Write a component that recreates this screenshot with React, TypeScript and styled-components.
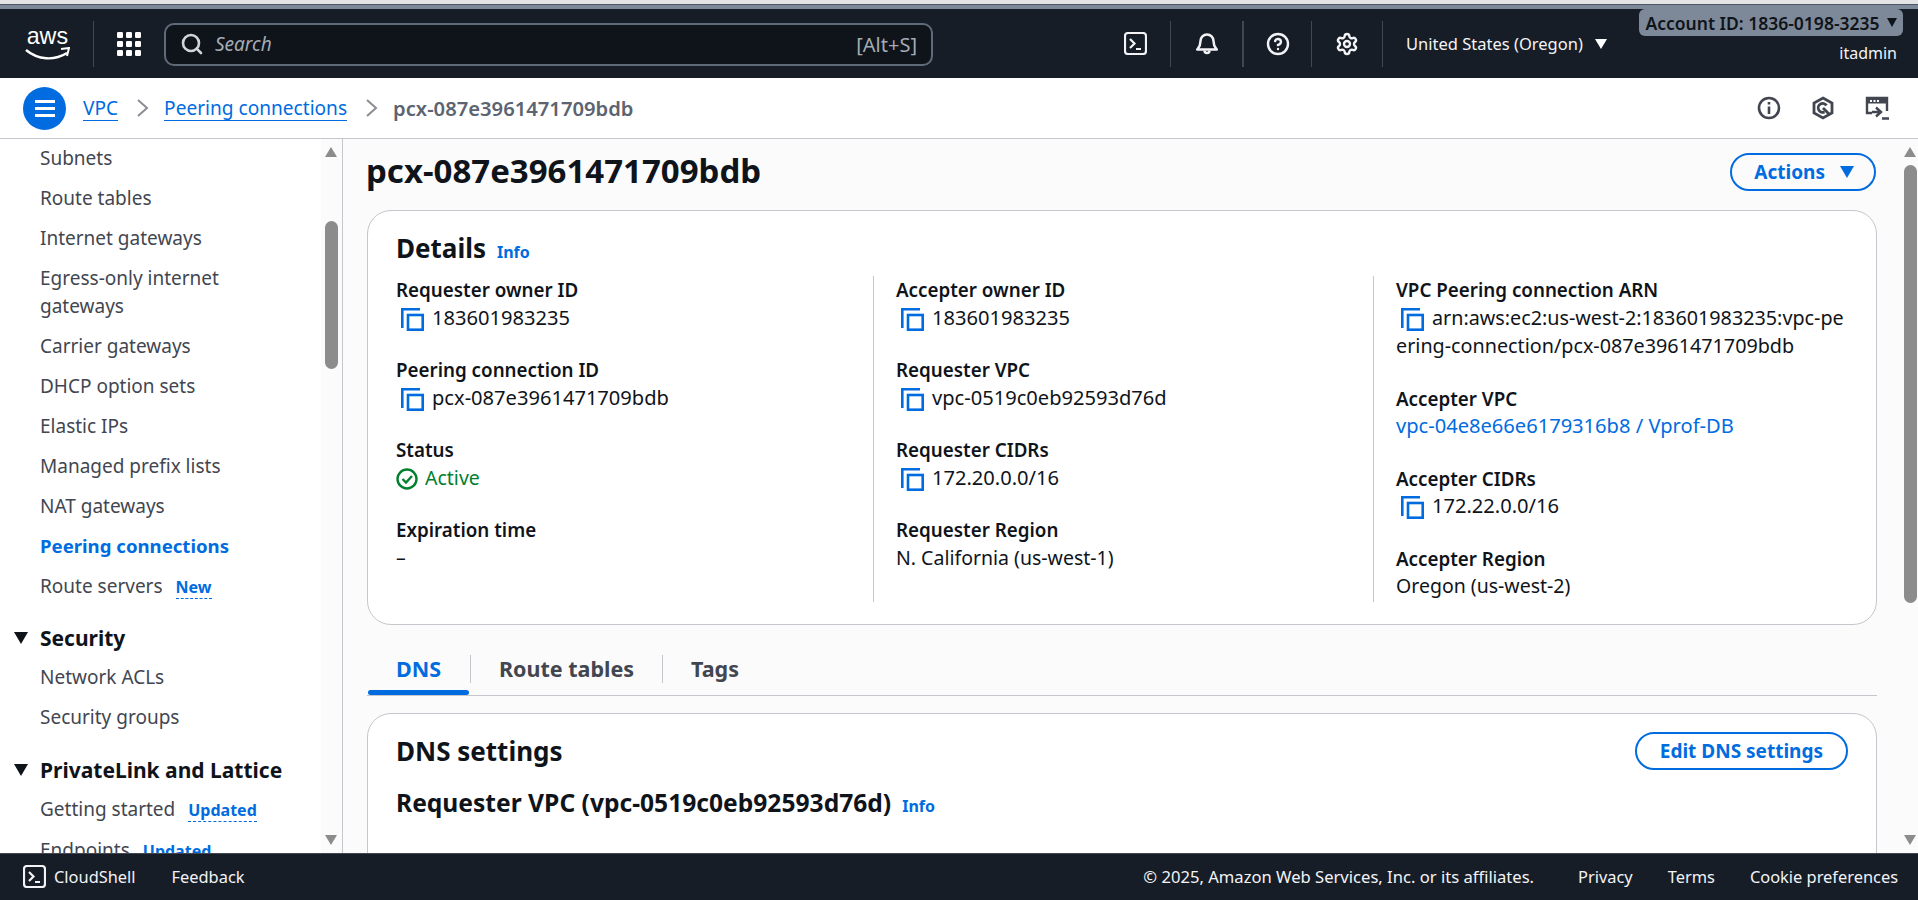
import { createGlobalStyle } from "styled-components";
import styled from "styled-components";
import { CircleHelp, Search, Settings } from "lucide-react";

const GlobalStyle = createGlobalStyle`
    html, body {
        margin: 0;
        height: 100%;
        overflow: hidden;
        background: #ffffff;
        font-family: "Noto Sans", "Open Sans", sans-serif;
    }
    * {
        box-sizing: border-box;
    }
`;

const Page = styled.div`
    width: 1918px;
    height: 900px;
    display: flex;
    flex-direction: column;
    overflow: hidden;
    color: #0f141a;
`;

const TopStrip = styled.div`
    height: 9px;
    flex: none;
    background: #7d8998;
    border-top: 4px solid #e4e4e6;
    box-shadow: inset 0 1px 0 #4a5565;
`;

const TopNav = styled.header`
    height: 69px;
    flex: none;
    position: relative;
    display: flex;
    align-items: center;
    background: #161d26;
    color: #ffffff;
    padding-left: 25px;
`;

const Logo = styled.div`
    width: 45px;
    height: 38px;
    margin-right: 23px;
    flex: none;
    display: flex;
    flex-direction: column;
    align-items: center;
    color: #ffffff;
`;

const LogoWord = styled.span`
    font-family: "Liberation Sans", sans-serif;
    font-size: 24px;
    line-height: 22px;
    transform: scaleX(0.97);
`;

const NavSep = styled.div<{ $w?: number }>`
    width: ${(p) => p.$w ?? 1}px;
    height: 46px;
    background: #424650;
    flex: none;
`;

const SearchBox = styled.div`
    width: 769px;
    height: 43px;
    margin-top: 1px;
    flex: none;
    display: flex;
    align-items: center;
    padding: 0 14px 0 14px;
    background: #0f141a;
    border: 2px solid #5f6b7a;
    border-radius: 10px;
    color: #a4abb5;
    font-size: 20px;
`;

const SearchText = styled.span`
    flex: 1;
    font-style: italic;
    font-size: 19px;
    margin-left: 11px;
`;

const IconCell = styled.div<{ $w: number; $end?: boolean }>`
    width: ${(p) => p.$w}px;
    display: flex;
    justify-content: ${(p) => (p.$end ? "flex-end" : "center")};
    padding-right: ${(p) => (p.$end ? 23 : 0)}px;
    align-items: center;
    flex: none;
`;

const Region = styled.div`
    margin-left: 23px;
    display: flex;
    align-items: center;
    gap: 12px;
    font-size: 16.5px;
    color: #f3f3f7;
`;

const SmallCaret = styled.span<{ $color?: string; $size?: number }>`
    width: 0;
    height: 0;
    display: inline-block;
    flex: none;
    border-left: ${(p) => (p.$size ?? 12) / 2}px solid transparent;
    border-right: ${(p) => (p.$size ?? 12) / 2}px solid transparent;
    border-top: ${(p) => (p.$size ?? 12) * 0.85}px solid ${(p) => p.$color ?? "#ffffff"};
`;

const AccountBadge = styled.div`
    position: absolute;
    top: 0;
    right: 15px;
    height: 27px;
    width: 264px;
    display: flex;
    align-items: center;
    justify-content: center;
    gap: 7px;
    background: #7d8998;
    border-radius: 6px;
    color: #0f141a;
    font-size: 17.5px;
    font-weight: 600;
    white-space: nowrap;
`;

const UserName = styled.div`
    position: absolute;
    right: 21px;
    top: 33px;
    font-size: 16px;
    color: #f3f3f7;
`;

const Breadcrumbs = styled.div`
    height: 61px;
    flex: none;
    display: flex;
    align-items: center;
    padding: 0 29px 0 23px;
    background: #ffffff;
    border-bottom: 1px solid #c6c6cd;
    font-size: 19.1px;
`;

const MenuButton = styled.div`
    width: 43px;
    height: 43px;
    border-radius: 50%;
    background: #006ce0;
    display: flex;
    flex-direction: column;
    align-items: center;
    justify-content: center;
    gap: 4px;
    margin-right: 17px;
`;

const MenuBar = styled.span`
    width: 20px;
    height: 3px;
    background: #ffffff;
`;

const Crumb = styled.span`
    color: #006ce0;
    line-height: 24px;
    border-bottom: 1px solid #006ce0;
`;

const CrumbCurrent = styled.span`
    color: #5b6470;
    font-weight: 600;
    font-size: 20.2px;
`;

const CrumbChevron = styled.svg`
    width: 13px;
    height: 22px;
    margin: 0 15px 0 18px;
    flex: none;
`;

const CrumbTools = styled.div`
    margin-left: auto;
    display: flex;
    align-items: center;
    gap: 30px;
    color: #424650;
`;

const Body = styled.div`
    flex: 1;
    min-height: 0;
    display: flex;
`;

const Sidebar = styled.nav`
    width: 343px;
    flex: none;
    display: flex;
    background: #ffffff;
    border-right: 1px solid #c6c6cd;
    overflow: hidden;
`;

const SideList = styled.div`
    width: 321px;
    flex: none;
    margin-top: -1px;
    padding-left: 40px;
    overflow: hidden;
`;

const SideItem = styled.div<{ $active?: boolean }>`
    padding: 6px 0;
    font-size: ${(p) => (p.$active ? 18.6 : 19)}px;
    line-height: 28px;
    color: ${(p) => (p.$active ? "#006ce0" : "#424650")};
    font-weight: ${(p) => (p.$active ? 700 : 400)};
    white-space: pre;
`;

const SideBadge = styled.span`
    margin-left: 13px;
    color: #006ce0;
    font-size: 16px;
    font-weight: 700;
    border-bottom: 1px dashed #006ce0;
`;

const SideHeading = styled.div<{ $top: number }>`
    display: flex;
    align-items: center;
    height: 39px;
    margin: ${(p) => p.$top}px 0 0 -26px;
    font-size: 21px;
    line-height: 30px;
    font-weight: 700;
    color: #0f141a;
    gap: 12px;
    white-space: nowrap;
`;

const ScrollTrack = styled.div<{ $w: number }>`
    width: ${(p) => p.$w}px;
    flex: none;
    position: relative;
    background: #fbfbfb;
`;

const ScrollThumb = styled.div<{ $top: number; $h: number }>`
    position: absolute;
    left: 50%;
    top: ${(p) => p.$top}px;
    width: 13px;
    height: ${(p) => p.$h}px;
    margin-left: -6.5px;
    border-radius: 7px;
    background: #8c8c8c;
`;

const ScrollArrow = styled.span<{ $down?: boolean }>`
    position: absolute;
    left: 50%;
    margin-left: -6.5px;
    width: 0;
    height: 0;
    border-left: 6.5px solid transparent;
    border-right: 6.5px solid transparent;
    ${(p) =>
        p.$down
            ? "bottom: 8px; border-top: 10px solid #8c8c8c;"
            : "top: 8px; border-bottom: 10px solid #8c8c8c;"}
`;

const Main = styled.main`
    flex: 1;
    min-width: 0;
    background: #fbfbfb;
    overflow: hidden;
`;

const Content = styled.div`
    width: 1510px;
    margin-left: 24px;
`;

const TitleRow = styled.div`
    height: 71px;
    padding: 0 1px 6px 0;
    display: flex;
    align-items: center;
    justify-content: space-between;
`;

const Title = styled.h1`
    margin: 0 0 2px -1px;
    font-size: 33px;
    font-weight: 700;
    line-height: 40px;
`;

const PillButton = styled.button`
    height: 38px;
    padding: 0 20px 0 22px;
    display: flex;
    align-items: center;
    gap: 15px;
    background: transparent;
    border: 2px solid #006ce0;
    border-radius: 20px;
    color: #006ce0;
    font-family: inherit;
    font-size: 19px;
    font-weight: 700;
`;

const Card = styled.section`
    background: #ffffff;
    border: 1px solid #c6c6cd;
    border-radius: 24px;
    padding: 20px 28px 22px;
`;

const CardHeading = styled.h2`
    margin: 0;
    font-size: 26px;
    line-height: 34px;
    font-weight: 700;
    display: flex;
    align-items: baseline;
    gap: 11px;
`;

const InfoLink = styled.span`
    color: #006ce0;
    font-size: 16px;
    font-weight: 700;
`;

const Columns = styled.div`
    display: grid;
    grid-template-columns: repeat(3, 500px);
    margin: 7px -28px 0 0;
`;

const Column = styled.div<{ $divider?: boolean }>`
    padding: 0 ${(p) => (p.$divider ? 44 : 38)}px 0 ${(p) => (p.$divider ? 22 : 0)}px;
    border-left: ${(p) => (p.$divider ? "1px solid #c6c6cd" : "none")};
    margin-left: ${(p) => (p.$divider ? -23 : 0)}px;
    width: ${(p) => (p.$divider ? 523 : 500)}px;
    display: flex;
    flex-direction: column;
    gap: 23px;
`;

const Field = styled.div`
    line-height: 28.5px;
`;

const FieldLabel = styled.div`
    font-size: 18.8px;
    font-weight: 600;
    color: #0f141a;
`;

const FieldValue = styled.div<{ $tone?: string; $size?: number }>`
    margin: -1px 0 1px;
    font-size: ${(p) => p.$size ?? 19.5}px;
    color: ${(p) => p.$tone ?? "#0f141a"};
    word-break: break-all;
`;

const CopyIcon = styled.svg`
    width: 23px;
    height: 23px;
    margin: 0 8px 0 5px;
    vertical-align: -6px;
`;

const StatusIcon = styled.svg`
    width: 22px;
    height: 22px;
    margin-right: 7px;
    vertical-align: -5px;
`;

const Tabs = styled.div`
    height: 46px;
    margin-top: 25px;
    display: flex;
    align-items: flex-end;
    border-bottom: 1px solid #c6c6cd;
`;

const Tab = styled.div<{ $active?: boolean; $w: number }>`
    position: relative;
    width: ${(p) => p.$w}px;
    height: 45px;
    display: flex;
    align-items: center;
    justify-content: center;
    padding-bottom: 8px;
    font-size: 21.5px;
    font-weight: 700;
    color: ${(p) => (p.$active ? "#006ce0" : "#424650")};
    &::after {
        content: "";
        display: ${(p) => (p.$active ? "block" : "none")};
        position: absolute;
        left: 1px;
        right: 1px;
        bottom: 0;
        height: 5px;
        border-radius: 3px;
        background: #006ce0;
    }
`;

const TabSep = styled.div`
    width: 1px;
    height: 28px;
    margin-bottom: 12px;
    background: #c6c6cd;
`;

const DnsCard = styled(Card)`
    margin-top: 17px;
    height: 300px;
    padding: 18px 28px;
`;

const DnsHeader = styled.div`
    display: flex;
    justify-content: space-between;
    align-items: center;
`;

const EditButton = styled(PillButton)`
    padding: 0 23px;
`;

const SubHeading = styled.h3`
    margin: 16px 0 0;
    font-size: 24.6px;
    line-height: 34px;
    font-weight: 700;
    display: flex;
    align-items: baseline;
    gap: 11px;
`;

const Footer = styled.footer`
    height: 47px;
    flex: none;
    display: flex;
    align-items: center;
    padding: 0 20px 1px 23px;
    background: #161d26;
    color: #f3f3f7;
    font-size: 16.4px;
    border-top: 1px solid #424650;
`;

const FooterItem = styled.span<{ $gap?: number }>`
    margin-left: ${(p) => p.$gap ?? 0}px;
    white-space: nowrap;
`;

const Copyright = styled(FooterItem)`
    font-size: 16.6px;
`;

const FooterSpacer = styled.div`
    flex: 1;
`;

const ID_SIZE = 20.1;

function Copy() {
    return (
        <CopyIcon viewBox="0 0 23 23" fill="none" stroke="#006ce0" strokeWidth="2.6">
            <path d="M1.3 20V1.3H19" />
            <rect x="7" y="7" width="14.7" height="14.7" />
        </CopyIcon>
    );
}

function ShellIcon() {
    return (
        <svg width="23" height="23" viewBox="0 0 23 23" fill="none" stroke="#f3f3f7" strokeWidth="2.2">
            <rect x="1" y="1" width="21" height="21" rx="3" />
            <path d="M6 7l4.5 4.500L6 16M12 17h5" />
        </svg>
    );
}

function Chevron() {
    return (
        <CrumbChevron viewBox="0 0 13 22" fill="none" stroke="#8c8c94" strokeWidth="2">
            <path d="M2 3l9 8-9 8" />
        </CrumbChevron>
    );
}

const requesterFields = [
    ["Accepter owner ID", "183601983235"],
    ["Requester VPC", "vpc-0519c0eb92593d76d"],
    ["Requester CIDRs", "172.20.0.0/16"],
];

const sideTop = [
    "Subnets",
    "Route tables",
    "Internet gateways",
    "Egress-only internet\ngateways",
    "Carrier gateways",
    "DHCP option sets",
    "Elastic IPs",
    "Managed prefix lists",
    "NAT gateways",
];

export default function App() {
    return (
        <Page>
            <GlobalStyle />
            <TopStrip />
            <TopNav>
                <Logo>
                    <LogoWord>aws</LogoWord>
                    <svg width="45" height="14" viewBox="0 0 45 14" fill="none">
                        <path d="M1 3c12 10 28 11 41 3" stroke="#fff" strokeWidth="2.4" />
                        <path d="M36 2l8-1-2 8" stroke="#fff" strokeWidth="2" />
                    </svg>
                </Logo>
                <NavSep />
                <IconCell $w={70}>
                    <svg width="24" height="24" viewBox="0 0 24 24" fill="#fff">
                        {[0, 9, 18].map((y) =>
                            [0, 9, 18].map((x) => <rect key={`${x}${y}`} x={x} y={y} width="6" height="6" rx="1.2" />),
                        )}
                    </svg>
                </IconCell>
                <SearchBox>
                    <Search size={24} color="#d1d5db" strokeWidth={2.6} />
                    <SearchText>Search</SearchText>
                    <span>[Alt+S]</span>
                </SearchBox>
                <IconCell $w={237} $end>
                    <ShellIcon />
                </IconCell>
                <NavSep />
                <IconCell $w={71}>
                    <svg width="24" height="24" viewBox="0 0 24 24" fill="none" stroke="#f3f3f7" strokeWidth="2.5" strokeLinejoin="round">
                        <path d="M12 2.500A6.500 6.500 0 0 0 5.500 9c0 5-1.800 6.500-3.300 8.500h19.600C20.300 15.500 18.500 14 18.500 9A6.500 6.500 0 0 0 12 2.500z" />
                        <path d="M9.500 18.500a2.500 2.500 0 0 0 5 0" />
                    </svg>
                </IconCell>
                <NavSep $w={2} />
                <IconCell $w={67}>
                    <CircleHelp size={24} strokeWidth={2.4} color="#f3f3f7" />
                </IconCell>
                <NavSep />
                <IconCell $w={70}>
                    <Settings size={24} strokeWidth={2.4} color="#f3f3f7" />
                </IconCell>
                <NavSep />
                <Region>
                    United States (Oregon) <SmallCaret $size={12} />
                </Region>
                <AccountBadge>
                    Account ID: 1836-0198-3235 <SmallCaret $color="#0f141a" $size={11} />
                </AccountBadge>
                <UserName>itadmin</UserName>
            </TopNav>
            <Breadcrumbs>
                <MenuButton>
                    <MenuBar />
                    <MenuBar />
                    <MenuBar />
                </MenuButton>
                <Crumb>VPC</Crumb>
                <Chevron />
                <Crumb>Peering connections</Crumb>
                <Chevron />
                <CrumbCurrent>pcx-087e3961471709bdb</CrumbCurrent>
                <CrumbTools>
                    <svg width="24" height="24" viewBox="0 0 24 24" fill="none" stroke="#424650" strokeWidth="2.6">
                        <circle cx="12" cy="12" r="10" />
                        <path d="M12 10.500V18M12 6v2.500" />
                    </svg>
                    <svg width="24" height="24" viewBox="0 0 24 24" fill="none" stroke="#424650" strokeWidth="2.8">
                        <path d="M12 2l9 5v10l-9 5-9-5V7z" />
                        <path d="M15.500 9.500a4.500 4.500 0 1 0-2 6.500M12 12l6 6" />
                    </svg>
                    <svg width="24" height="24" viewBox="0 0 24 24" fill="none" stroke="#424650" strokeWidth="2.4">
                        <path d="M7 17H2V2h20v13" />
                        <path d="M2 5h20" strokeWidth="5" />
                        <path d="M5 5h9" stroke="#fff" strokeWidth="2" strokeDasharray="2 1.500" />
                        <path d="M7 16h8M11 11.500l5 4.500-5 4.500M17 22.500h7" />
                    </svg>
                </CrumbTools>
            </Breadcrumbs>
            <Body>
                <Sidebar>
                    <SideList>
                        {sideTop.map((item) => (
                            <SideItem key={item}>{item}</SideItem>
                        ))}
                        <SideItem $active>Peering connections</SideItem>
                        <SideItem>
                            Route servers<SideBadge>New</SideBadge>
                        </SideItem>
                        <SideHeading $top={11}>
                            <SmallCaret $color="#0f141a" $size={15} />
                            Security
                        </SideHeading>
                        <SideItem>Network ACLs</SideItem>
                        <SideItem>Security groups</SideItem>
                        <SideHeading $top={13}>
                            <SmallCaret $color="#0f141a" $size={15} />
                            PrivateLink and Lattice
                        </SideHeading>
                        <SideItem>
                            Getting started<SideBadge>Updated</SideBadge>
                        </SideItem>
                        <SideItem>
                            Endpoints<SideBadge>Updated</SideBadge>
                        </SideItem>
                    </SideList>
                    <ScrollTrack $w={21}>
                        <ScrollArrow />
                        <ScrollThumb $top={82} $h={148} />
                        <ScrollArrow $down />
                    </ScrollTrack>
                </Sidebar>
                <Main>
                    <Content>
                        <TitleRow>
                            <Title>pcx-087e3961471709bdb</Title>
                            <PillButton>
                                Actions <SmallCaret $color="#006ce0" $size={15} />
                            </PillButton>
                        </TitleRow>
                        <Card>
                            <CardHeading>
                                Details <InfoLink>Info</InfoLink>
                            </CardHeading>
                            <Columns>
                                <Column>
                                    <Field>
                                        <FieldLabel>Requester owner ID</FieldLabel>
                                        <FieldValue $size={ID_SIZE}>
                                            <Copy />
                                            183601983235
                                        </FieldValue>
                                    </Field>
                                    <Field>
                                        <FieldLabel>Peering connection ID</FieldLabel>
                                        <FieldValue $size={ID_SIZE}>
                                            <Copy />
                                            pcx-087e3961471709bdb
                                        </FieldValue>
                                    </Field>
                                    <Field>
                                        <FieldLabel>Status</FieldLabel>
                                        <FieldValue $tone="#00802f">
                                            <StatusIcon viewBox="0 0 22 22" fill="none" stroke="#00802f" strokeWidth="2.4">
                                                <circle cx="11" cy="11" r="9.500" />
                                                <path d="M6.500 11l3.500 3.500 6-6.500" />
                                            </StatusIcon>
                                            Active
                                        </FieldValue>
                                    </Field>
                                    <Field>
                                        <FieldLabel>Expiration time</FieldLabel>
                                        <FieldValue>–</FieldValue>
                                    </Field>
                                </Column>
                                <Column $divider>
                                    {requesterFields.map(([label, value]) => (
                                        <Field key={label}>
                                            <FieldLabel>{label}</FieldLabel>
                                            <FieldValue $size={ID_SIZE}>
                                                <Copy />
                                                {value}
                                            </FieldValue>
                                        </Field>
                                    ))}
                                    <Field>
                                        <FieldLabel>Requester Region</FieldLabel>
                                        <FieldValue>N. California (us-west-1)</FieldValue>
                                    </Field>
                                </Column>
                                <Column $divider>
                                    <Field>
                                        <FieldLabel>VPC Peering connection ARN</FieldLabel>
                                        <FieldValue $size={19.75}>
                                            <Copy />
                                            arn:aws:ec2:us-west-2:183601983235:vpc-peering-connection/pcx-087e3961471709bdb
                                        </FieldValue>
                                    </Field>
                                    <Field>
                                        <FieldLabel>Accepter VPC</FieldLabel>
                                        <FieldValue $size={ID_SIZE} $tone="#006ce0">
                                            vpc-04e8e66e6179316b8 / Vprof-DB
                                        </FieldValue>
                                    </Field>
                                    <Field>
                                        <FieldLabel>Accepter CIDRs</FieldLabel>
                                        <FieldValue $size={ID_SIZE}>
                                            <Copy />
                                            172.22.0.0/16
                                        </FieldValue>
                                    </Field>
                                    <Field>
                                        <FieldLabel>Accepter Region</FieldLabel>
                                        <FieldValue>Oregon (us-west-2)</FieldValue>
                                    </Field>
                                </Column>
                            </Columns>
                        </Card>
                        <Tabs>
                            <Tab $active $w={103}>
                                DNS
                            </Tab>
                            <TabSep />
                            <Tab $w={191}>Route tables</Tab>
                            <TabSep />
                            <Tab $w={104}>Tags</Tab>
                        </Tabs>
                        <DnsCard>
                            <DnsHeader>
                                <CardHeading>DNS settings</CardHeading>
                                <EditButton>Edit DNS settings</EditButton>
                            </DnsHeader>
                            <SubHeading>
                                Requester VPC (vpc-0519c0eb92593d76d) <InfoLink>Info</InfoLink>
                            </SubHeading>
                        </DnsCard>
                    </Content>
                </Main>
                <ScrollTrack $w={16}>
                    <ScrollArrow />
                    <ScrollThumb $top={26} $h={438} />
                    <ScrollArrow $down />
                </ScrollTrack>
            </Body>
            <Footer>
                <ShellIcon />
                <FooterItem $gap={8}>CloudShell</FooterItem>
                <FooterItem $gap={36}>Feedback</FooterItem>
                <FooterSpacer />
                <Copyright>© 2025, Amazon Web Services, Inc. or its affiliates.</Copyright>
                <FooterItem $gap={44}>Privacy</FooterItem>
                <FooterItem $gap={35}>Terms</FooterItem>
                <FooterItem $gap={35}>Cookie preferences</FooterItem>
            </Footer>
        </Page>
    );
}
